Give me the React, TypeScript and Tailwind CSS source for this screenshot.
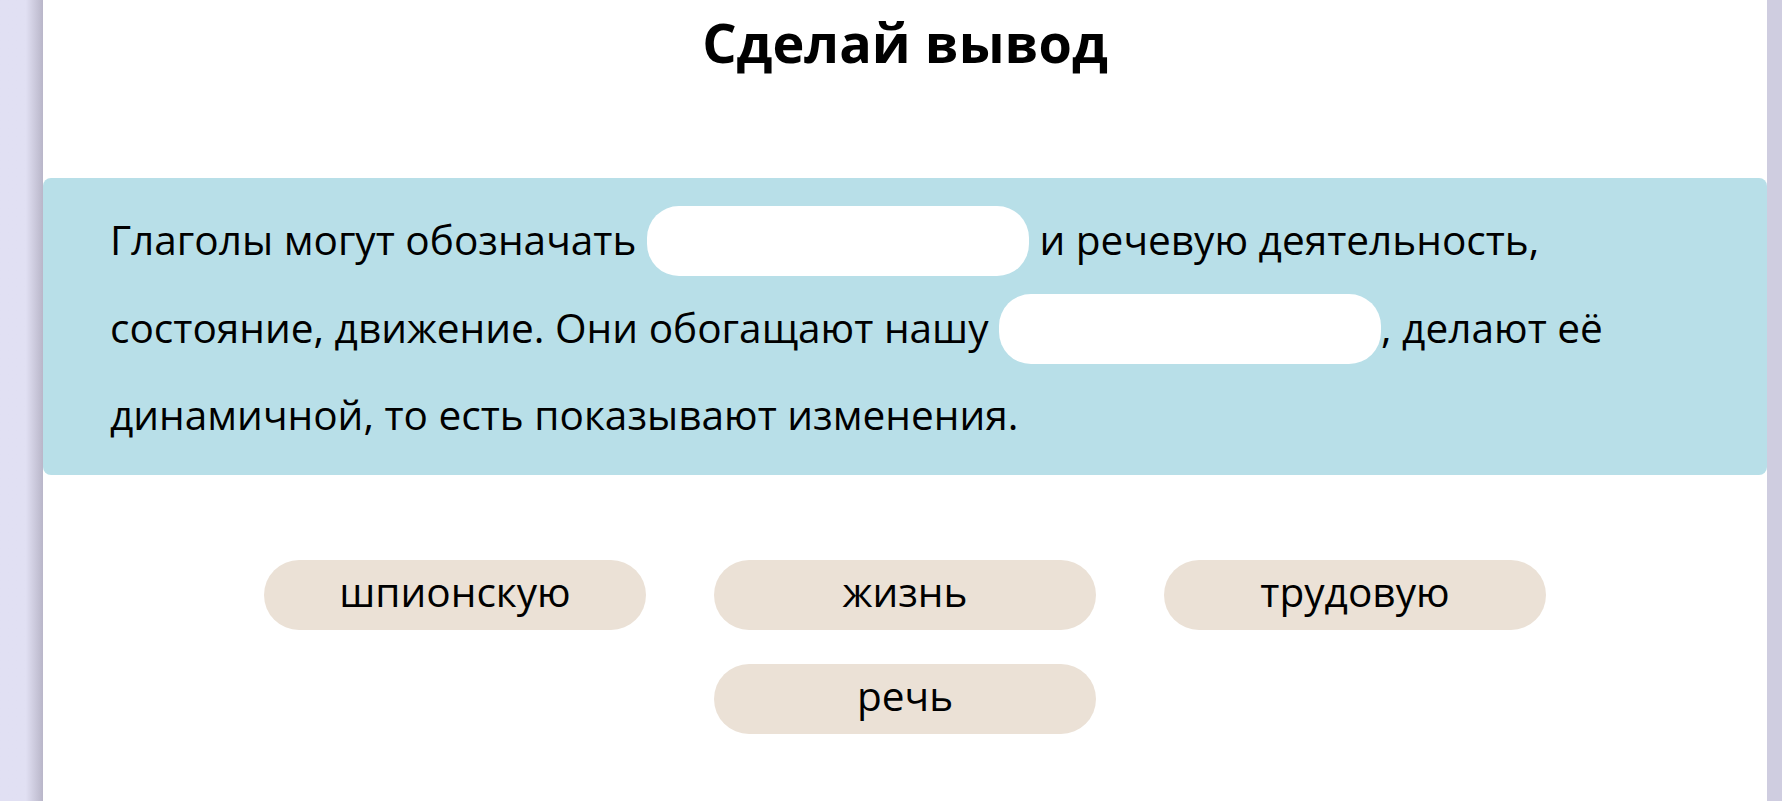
import { Fragment } from 'react';

const Blank = () => (
  <span className="inline-block w-[382px] h-[70px] rounded-[32px] bg-white align-[-21px]" />
);

const words = ['шпионскую', 'жизнь', 'трудовую', 'речь'];

export default function App() {
  return (
    <div className="flex min-h-screen bg-[#e1e0f3] font-['Open_Sans',sans-serif] text-black">
      {/* left gutter with the card's shadow */}
      <div className="w-[43px] shrink-0 bg-gradient-to-r from-[#e1e0f3] from-60% to-[#b9b6c9]" />

      <main className="w-[1724px] shrink-0 bg-white pb-16">
        <h1 className="pt-[4px] h-[178px] text-center text-[54px] font-bold leading-[76px]">
          Сделай вывод
        </h1>

        <div className="rounded-[8px] bg-[#b8dfe8] pl-[67px] pr-[67px] pt-[18px] pb-[16px] text-[40.6px] leading-[87.5px]">
          <p>
            Глаголы могут обозначать <Blank /> и речевую деятельность, состояние, движение. Они
            обогащают нашу <Blank />, делают её динамичной, то есть показывают изменения.
          </p>
        </div>

        <div className="mx-auto mt-[85px] flex w-[1282px] flex-wrap justify-center gap-x-[68px] gap-y-[34px]">
          {words.map((w) => (
            <Fragment key={w}>
              <button className="flex h-[70px] w-[382px] items-center justify-center rounded-full bg-[#ebe1d6] pb-[5px] text-[40.6px]">
                {w}
              </button>
            </Fragment>
          ))}
        </div>
      </main>

      <div className="flex-1 bg-[#cfcde0]" />
    </div>
  );
}
